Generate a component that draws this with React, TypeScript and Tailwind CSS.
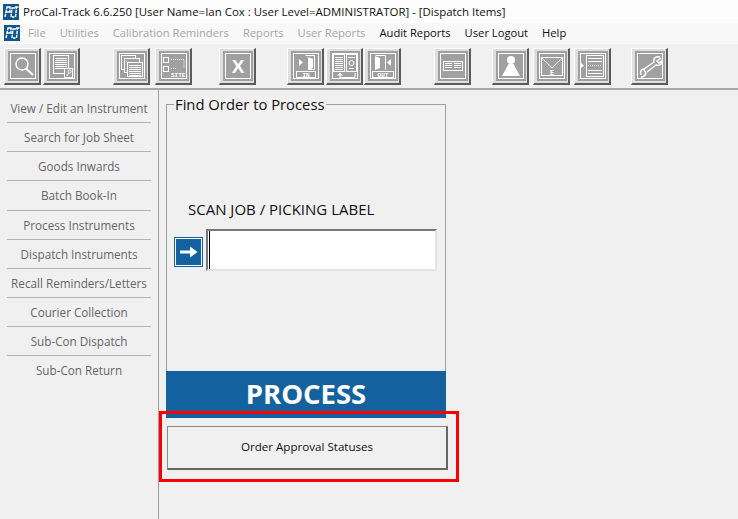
import React from 'react';

const MENU = [
  { label: 'File', on: false, w: 'ml-[8px]' },
  { label: 'Utilities', on: false, w: 'ml-[14px]' },
  { label: 'Calibration Reminders', on: false, w: 'ml-[14px]' },
  { label: 'Reports', on: false, w: 'ml-[14px]' },
  { label: 'User Reports', on: false, w: 'ml-[14px]' },
  { label: 'Audit Reports', on: true, w: 'ml-[14px]' },
  { label: 'User Logout', on: true, w: 'ml-[14px]' },
  { label: 'Help', on: true, w: 'ml-[14px]' },
];

const SIDE = [
  { label: 'View / Edit an Instrument', h: 'h-[29px]', line: true },
  { label: 'Search for Job Sheet', h: 'h-[29px]', line: true },
  { label: 'Goods Inwards', h: 'h-[29px]', line: true },
  { label: 'Batch Book-In', h: 'h-[30px]', line: true },
  { label: 'Process Instruments', h: 'h-[29px]', line: true },
  { label: 'Dispatch Instruments', h: 'h-[29px]', line: true },
  { label: 'Recall Reminders/Letters', h: 'h-[29px]', line: true },
  { label: 'Courier Collection', h: 'h-[29px]', line: true },
  { label: 'Sub-Con Dispatch', h: 'h-[29px]', line: true },
  { label: 'Sub-Con Return', h: 'h-[29px]', line: false },
];

const s = { fill: 'none', stroke: '#fff', strokeWidth: 1 };
const lines = (x1: number, x2: number, ys: number[]) =>
  ys.map((y) => <path key={y} d={`M${x1} ${y}.5H${x2}`} {...s} />);

const Logo = () => (
  <svg width="16" height="16" viewBox="0 0 16 16" className="shrink-0">
    <rect width="16" height="16" fill="#11568f" />
    <path d="M2 13L4 3H7V8H3.5M8 13L9 4H12M9 13H11.5M12 3H15.5M13.5 3L12.5 13" fill="none" stroke="#fff" strokeWidth="1.4" />
    <path d="M0 5.5H16M0 9.5H16" stroke="#11568f" strokeWidth="0.7" />
  </svg>
);

const ICONS: React.ReactNode[] = [
  <>
    <circle cx="11" cy="10" r="6" fill="none" stroke="#fff" strokeWidth="1.5" />
    <path d="M15 14.5L22 21" stroke="#fff" strokeWidth="2" />
  </>,
  <>
    <rect x="3.5" y="1.5" width="15" height="18" {...s} />
    {lines(5, 17, [4, 6, 8, 10, 12, 14])}
    <rect x="14.5" y="14.5" width="8" height="9" fill="#a0a0a0" stroke="#fff" />
    <circle cx="19.5" cy="17.5" r="1.5" {...s} />
    <path d="M18.5 19L17 22" {...s} />
  </>,
  <>
    <rect x="1.5" y="1.5" width="14" height="14" {...s} />
    <rect x="4.5" y="4.5" width="15" height="14" fill="#a0a0a0" stroke="#fff" />
    <rect x="7.5" y="8.5" width="15" height="14" fill="#a0a0a0" stroke="#fff" />
    {lines(9, 21, [11, 13, 15, 17, 19, 21])}
    {lines(6, 7, [7])}
  </>,
  <>
    <rect x="1.5" y="3.5" width="5" height="5" {...s} />
    <rect x="1.5" y="12.5" width="5" height="5" {...s} />
    <path d="M9 5.5H22V14M9 14.5H14" fill="none" stroke="#fff" strokeDasharray="1 1" />
    <text x="9" y="23" fontSize="6" fontWeight="700" fill="#fff" fontFamily="Liberation Mono, monospace">SITE</text>
  </>,
  <text x="12" y="19" textAnchor="middle" fontSize="19" fontWeight="700" fill="#fff" fontFamily="Liberation Sans, sans-serif">X</text>,
  <>
    <path d="M11.5 1.5H20.5V15.5H15" fill="none" stroke="#fff" />
    <path d="M14 3L19 5V14L14 16Z" fill="#fff" />
    <path d="M5 5L9 8.5L5 12Z" fill="#fff" />
    <rect x="2.5" y="17.5" width="19" height="6" {...s} />
    <text x="12" y="23" textAnchor="middle" fontSize="6" fontWeight="700" fill="#fff" fontFamily="Liberation Mono, monospace">IN</text>
  </>,
  <>
    <rect x="0.5" y="0.5" width="11" height="17" {...s} />
    {lines(2, 10, [3, 5, 7, 9, 11, 13, 15])}
    <rect x="13.5" y="0.5" width="10" height="17" {...s} />
    {lines(15, 22, [3])}
    <circle cx="18.5" cy="9" r="2.5" {...s} />
    <path d="M16 14.5H21" {...s} />
    <path d="M7 23.5H22V19" {...s} />
    <path d="M7 18.5L4 21.5H10Z" fill="#fff" />
    <path d="M7 21V24" {...s} />
  </>,
  <>
    <path d="M4.5 1.5H14.5V15.5" fill="none" stroke="#fff" />
    <path d="M4 2L9 4V14L4 16Z" fill="#fff" />
    <path d="M20 5L16 8.5L20 12Z" fill="#fff" />
    <rect x="1.5" y="17.5" width="21" height="6" {...s} />
    <text x="12" y="23" textAnchor="middle" fontSize="6" fontWeight="700" fill="#fff" fontFamily="Liberation Mono, monospace">OUT</text>
  </>,
  <>
    <rect x="2.5" y="7.5" width="19" height="9" {...s} />
    {lines(4, 11, [9, 11, 13])}
    {lines(13, 20, [9, 11, 13])}
  </>,
  <>
    <circle cx="12" cy="6" r="4" fill="#fff" />
    <path d="M9.5 10H14.5L21 22H3Z" fill="#fff" />
  </>,
  <>
    <rect x="1.5" y="3.5" width="21" height="18" {...s} />
    <path d="M2 4L12 14L22 4" {...s} />
    <text x="12" y="21" textAnchor="middle" fontSize="7" fontWeight="700" fill="#fff" fontFamily="Liberation Mono, monospace">E</text>
  </>,
  <>
    <path d="M0 9L3 11.5L0 14Z" fill="#fff" />
    <rect x="5.5" y="1.5" width="17" height="21" {...s} />
    {lines(7, 21, [4, 7, 16, 19])}
    <path d="M7 11.5H21" fill="none" stroke="#fff" strokeDasharray="1 1" />
  </>,
  <path
    d="M22 3C18 2 15 4 16 8L6 15C3 15 2 18 3 21M6 22L8 19L6 16M8 20C7 22 5 23 3 23M23 4L19 7L21 9L23.5 7C24 10 22 12 18 11L9 18"
    fill="none"
    stroke="#fff"
    strokeWidth="1.5"
  />,
];

const ToolButton = ({ icon, className }: { icon: React.ReactNode; className: string }) => (
  <div className={`w-[37px] h-[37px] shrink-0 border-t border-l border-t-white border-l-white border-r-2 border-b-2 border-r-[#5c5c5c] border-b-[#5c5c5c] bg-[#dedede] pl-[3px] pt-[2px] pr-[1px] pb-[2px] ${className}`}>
    <div className="w-full h-full bg-[#a0a0a0] p-[2px]">
      <div className="w-full h-full border border-white">
        <svg width="24" height="24" viewBox="0 0 24 24" className="block">
          {icon}
        </svg>
      </div>
    </div>
  </div>
);

const GAPS = ['ml-[4px]', 'ml-[2px]', 'ml-[33px]', 'ml-[5px]', 'ml-[27px]', 'ml-[31px]', 'ml-[2px]', 'ml-[1px]', 'ml-[33px]', 'ml-[21px]', 'ml-[4px]', 'ml-[4px]', 'ml-[20px]'];

export default function App() {
  return (
    <div className="relative w-[738px] h-[519px] overflow-hidden bg-[#f0f0f0] flex flex-col font-['Open_Sans','Noto_Sans',sans-serif] text-[11.2px]">
      <div className="h-[23px] shrink-0 bg-[#fdfdfd] flex items-center pl-[3px] gap-[4px]">
        <Logo />
        <span className="text-[11.45px] text-[#111] whitespace-nowrap">ProCal-Track 6.6.250 [User Name=Ian Cox : User Level=ADMINISTRATOR] - [Dispatch Items]</span>
      </div>

      <div className="h-[20px] shrink-0 bg-[#f8f8f8] flex items-center pl-[4px] whitespace-nowrap">
        <Logo />
        {MENU.map((m) => (
          <span key={m.label} className={`${m.w} ${m.on ? 'text-[#111]' : 'text-[#a6a6a6]'}`}>{m.label}</span>
        ))}
      </div>

      <div className="h-[47px] shrink-0 bg-[#f0f0f0] border-t border-t-white border-b-2 border-b-[#a8a8a8] flex items-start pt-[4px]">
        {ICONS.map((icon, i) => (
          <ToolButton key={i} icon={icon} className={GAPS[i]} />
        ))}
      </div>

      <div className="flex-1 flex min-h-0">
        <aside className="w-[159px] shrink-0 border-r border-r-[#a0a0a0] pt-[4px] pl-[7px] pr-[7px] text-[11.7px]">
          {SIDE.map((item) => (
            <div
              key={item.label}
              className={`${item.h} pt-[1px] flex items-center justify-center text-[#666] whitespace-nowrap ${item.line ? 'border-b border-b-[#b4b4b4]' : ''}`}
            >
              {item.label}
            </div>
          ))}
        </aside>

        <main className="pl-[7px] pt-[5px] w-[300px]">
          <fieldset className="w-[280px] h-[276px] border border-[#a0a0a0] border-b-0 pl-[7px] relative">
            <legend className="text-[14.8px] leading-[19px] text-[#111] px-px -mt-px">Find Order to Process</legend>
            <div className="pl-[14px] pt-[86px] text-[15px] leading-[19px] text-[#111]">SCAN JOB / PICKING LABEL</div>
            <div className="flex items-center gap-[3px] mt-[10px]">
              <div className="w-[29px] h-[30px] bg-[#13629f] flex items-center justify-center mt-[4px] p-[1px]">
                <div className="w-full h-full border border-white flex items-center justify-center">
                  <svg width="20" height="14" viewBox="0 0 20 14">
                    <path d="M1 5.5H11V1.5L18.5 7L11 12.5V8.5H1Z" fill="#fff" />
                  </svg>
                </div>
              </div>
              <div className="w-[231px] h-[42px] bg-white border-2 border-t-[#777] border-l-[#777] border-r-[#e4e4e4] border-b-[#e4e4e4] pl-[1px]">
                <div className="w-[1px] h-full bg-black" />
              </div>
            </div>
          </fieldset>
          <div className="w-[280px] h-[47px] pb-[2px] bg-[#13629f] flex items-center justify-center text-white text-[27.5px] font-bold leading-none">PROCESS</div>
          <button className="block w-[281px] h-[44px] ml-px mt-[8px] pb-[1px] bg-[#f0f0f0] border border-[#8a8a8a] border-r-2 border-b-2 border-r-[#666] border-b-[#666] rounded-[1px] text-[11.6px] text-[#111]">
            Order Approval Statuses
          </button>
        </main>
      </div>

      <div className="absolute left-[159px] top-[411px] w-[300px] h-[71px] border-[3px] border-[#ff0000] pointer-events-none" />
    </div>
  );
}
